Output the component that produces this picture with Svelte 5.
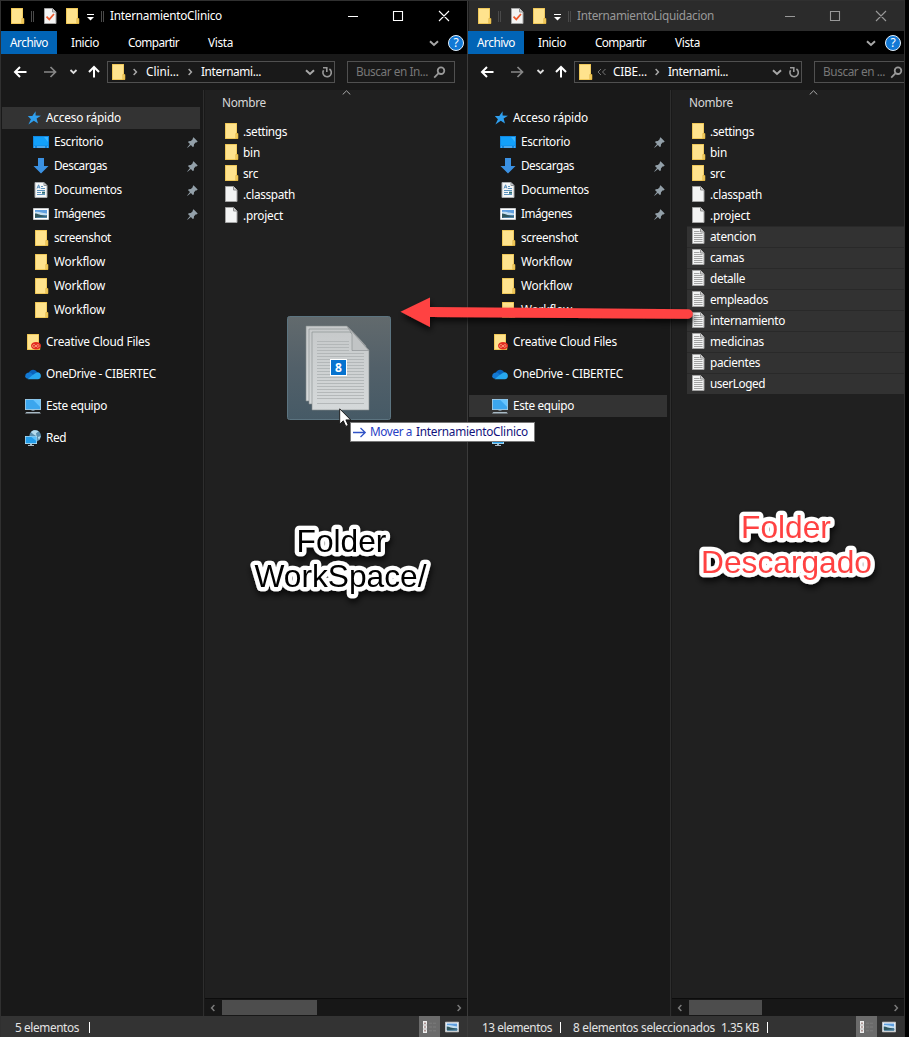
<script>
  const quick = [
    { icon: 'star', text: 'Acceso rápido', w: 75, root: true },
    { icon: 'desktop', text: 'Escritorio', w: 49, pin: true },
    { icon: 'download', text: 'Descargas', w: 53, pin: true },
    { icon: 'docs', text: 'Documentos', w: 68, pin: true },
    { icon: 'image', text: 'Imágenes', w: 51, pin: true },
    { icon: 'folder', text: 'screenshot', w: 57 },
    { icon: 'folder', text: 'Workflow', w: 51 },
    { icon: 'folder', text: 'Workflow', w: 51 },
    { icon: 'folder', text: 'Workflow', w: 51 },
    { icon: 'creative', text: 'Creative Cloud Files', w: 104, root: true, gap: true },
    { icon: 'onedrive', text: 'OneDrive - CIBERTEC', w: 110, root: true, gap: true },
    { icon: 'pc', text: 'Este equipo', w: 61, root: true, gap: true },
    { icon: 'network', text: 'Red', w: 20, root: true, gap: true },
  ];
  const tabs = [
    { text: 'Archivo', w: 38 },
    { text: 'Inicio', w: 28 },
    { text: 'Compartir', w: 51 },
    { text: 'Vista', w: 25 },
  ];
  const common = [
    { icon: 'folder', text: '.settings', w: 44 },
    { icon: 'folder', text: 'bin', w: 17 },
    { icon: 'folder', text: 'src', w: 15 },
    { icon: 'file', text: '.classpath', w: 52 },
    { icon: 'file', text: '.project', w: 40 },
  ];
  const selected = [
    ['atencion', 46], ['camas', 34], ['detalle', 35], ['empleados', 58],
    ['internamiento', 75], ['medicinas', 54], ['pacientes', 50], ['userLoged', 55],
  ].map(([text, w]) => ({ icon: 'text', text, w, selected: true }));

  const windows = [
    {
      id: 'left', title: 'InternamientoClinico', titleW: 112, current: 'Acceso rápido',
      crumb: 'Clini...', crumbW: 33, search: 'Buscar en In...', searchW: 72,
      files: common, status: [{ text: '5 elementos', w: 64 }],
    },
    {
      id: 'right', title: 'InternamientoLiquidacion', titleW: 137, current: 'Este equipo',
      crumb: 'CIBE...', crumbW: 34, search: 'Buscar en ...', searchW: 62,
      files: [...common, ...selected],
      status: [{ text: '13 elementos', w: 70 }, { text: '8 elementos seleccionados', w: 142, extra: '1.35 KB' }],
    },
  ];

  // Spreads letter spacing so a label takes its column width.
  function fit(node, width) {
    node.style.letterSpacing = '0px';
    const natural = node.getBoundingClientRect().width;
    node.style.letterSpacing = (width - natural) / node.textContent.length + 'px';
  }
</script>

{#snippet label(text, w)}<span class="label" use:fit={w}>{text}</span>{/snippet}

{#snippet icon(name)}
  <svg class="icon" width="16" height="16" viewBox="0 0 16 16">
    {#if name === 'folder' || name === 'creative'}
      <path d="M2 0H14V10.5H15V16H2Z" fill="#e9bd45" />
      <path d="M2.7 .7H13.4V15.3H2.7Z" fill="#ffe38d" />
      <path d="M12.8 10.5H15V15.5H12.8Z" fill="#f5cf5f" stroke="#d9a93a" stroke-width=".6" />
      {#if name === 'creative'}
        <ellipse cx="11" cy="11.7" rx="5" ry="3.8" fill="#e22b20" />
        <path d="M12.5 13.4 9.6 10.7C7.5 9.8 6.6 12.8 8.8 13.3 10.7 13.6 11.4 10.1 13.3 10.7 15 11.4 14 13.5 12.5 13.2" fill="none" stroke="#ffb08c" stroke-width=".8" />
      {/if}
    {:else if name === 'star'}
      <path d="M10.6 1.2 10.6 5.6 16 5.8 11.6 8.5 13 13.6 8.8 10.8 3.4 14.4 5.9 9.3 2.8 6 7.3 6Z" fill="#2f9fee" />
    {:else if name === 'desktop'}
      <path d="M0 2H16V14H0Z" fill="#1187e0" />
      <path d="M1 3H15V11.5H1Z" fill="#12a0fb" />
      <path d="M11 3H15V8Z" fill="#3bb6ff" />
      <path d="M1 13H2M4 13H12M14 13H15" stroke="#bce3ff" stroke-width=".7" />
    {:else if name === 'download'}
      <path d="M5 0H11V8H15.5L8 15.5.5 8H5Z" fill="#3b91e2" />
    {:else if name === 'docs'}
      <path d="M2 .5H11L14 3.5V15.5H2Z" fill="#f5f7f8" stroke="#a9adb0" />
      <path d="M11 .5V3.5H14" fill="none" stroke="#8b9094" />
      <path d="M4 6.5 5.6 2.8 7 6.5M4.6 5.2H6.6M8 4.5H10M8 6.5H12M4 8.5H12M4 10.5H8M4 12.5H12" fill="none" stroke="#4b86b5" stroke-width=".9" />
      <path d="M9 9.7H12V11.7H9Z" fill="#2b6d76" />
    {:else if name === 'image'}
      <path d="M.5 2.5H15.5V13.5H.5Z" fill="#fff" stroke="#c5c8ca" />
      <path d="M2 4H14V12H2Z" fill="#5f9fe0" />
      <path d="M2 6C5 5 8 6.5 14 7.5V9H2Z" fill="#c4def0" />
      <path d="M2 7.5C5 7.5 8 10 14 9.6V12H2Z" fill="#30565d" />
      <path d="M4 11.3 14 10.6V12H2Z" fill="#5185a9" />
    {:else if name === 'onedrive'}
      <path d="M3.7 7.3C4.6 3.7 9.4 2.1 12 6L8 11 2 10Z" fill="#0963bb" />
      <path d="M.2 10.2C.2 7.3 3.3 5.8 6 7L13 12.7H3C1.4 12.7.2 11.6.2 10.2Z" fill="#1379d3" />
      <path d="M7 9.4 11.4 6.4C14 5.8 16 7.7 15.9 10 15.9 11.8 14.7 13.2 12.8 13.2H2.6Z" fill="#27a7ef" />
    {:else if name === 'pc'}
      <path d="M0 1H16V12H0Z" fill="#a9cde3" />
      <path d="M.8 1.8H15.2V11.2H.8Z" fill="#3ba6ee" />
      <path d="M8 1.8H15.2V9Z" fill="#66c4fd" />
      <path d="M6.5 12H9.5V13H6.5Z" fill="#71828e" />
      <path d="M1.4 14H14.6L16 15.5H0Z" fill="#a9bac5" />
    {:else if name === 'network'}
      <circle cx="10.2" cy="5.8" r="5.8" fill="#5b8fae" />
      <path d="M6 2.2C8-.6 11-.2 13.7 1.3L11 3.3 11.6 6.2 8.7 4.6ZM12.8 7 15.8 6 14 10.2Z" fill="#b5dbed" />
      <path d="M0 6H12V14H0Z" fill="#b7dced" />
      <path d="M.7 6.7H11.3V13.2H.7Z" fill="#239ce9" />
      <path d="M6 6.7H11.3V11Z" fill="#5bc0fb" />
      <path d="M5 14H7V15H9V16H3V15H5Z" fill="#a9bac5" />
    {:else}
      <path d="M2.5 .5H10.5L14 4V15.5H2.5Z" fill="#f3f4f4" stroke="#a4a4a4" />
      <path d="M10.5 .5V4H14" fill="#d0d0d0" stroke="#929292" />
      {#if name === 'text'}
        <path d="M4 3.5H9.5M4 5.5H12.5M4 7.5H12.5M4 9.5H12.5M4 11.5H12.5M4 13.5H12.5" stroke="#989898" stroke-width=".9" />
      {:else if name === 'check'}
        <path d="M4.5 8.6 7.3 11.4 12 6" fill="none" stroke="#ed5b2e" stroke-width="1.7" />
      {/if}
    {/if}
  </svg>
{/snippet}

{#snippet chevron(dir)}
  <svg class="chevron {dir}" width="10" height="10" viewBox="0 0 10 10"><path d="M1 3.2 5 6.9 9 3.2" /></svg>
{/snippet}

<main>
  {#each windows as win (win.id)}
    <section class="window {win.id}">
      <header class="titlebar">
        <div class="quickbar">
          {@render icon('folder')}<i class="bar"></i>
          {@render icon('check')}
          {@render icon('folder')}
          <svg class="menu" width="9" height="8" viewBox="0 0 9 8"><path d="M1 1.5H8" stroke="#fff" /><path d="M1 4H8L4.5 7.5Z" fill="#fff" /></svg>
          <i class="bar second"></i>
          {@render label(win.title, win.titleW)}
        </div>
        <svg class="controls" width="104" height="12" viewBox="0 0 104 12">
          <path d="M0 6.5H10M45.5 1.5H54.5V10.5H45.5ZM91 1 101 11M101 1 91 11" />
        </svg>
      </header>

      <nav class="tabs">
        {#each tabs as tab, i}
          <div class="tab" class:primary={i === 0}>{@render label(tab.text, tab.w)}</div>
        {/each}
        <div class="help">
          {@render chevron('down')}
          <span class="question">?</span>
        </div>
      </nav>

      <div class="address">
        <svg class="arrows" width="92" height="16" viewBox="0 0 92 16">
          <path d="M6 8H17.5M11 3 6 8 11 13" stroke="#fff" stroke-width="2" />
          <path d="M35 8H46.5M41.5 3 46.5 8 41.5 13" stroke="#888" stroke-width="1.7" />
          <path d="M61.5 6 64.5 9 67.5 6" stroke="#ddd" stroke-width="1.8" />
          <path d="M85 13.5V3M80 8 85 3 90 8" stroke="#fff" stroke-width="2" />
        </svg>
        <div class="path">
          {@render icon('folder')}
          {#if win.id === 'right'}
            <svg class="double" width="10" height="8" viewBox="0 0 10 8"><path d="M4 1 1 4 4 7M8.5 1 5.5 4 8.5 7" /></svg>
          {:else}
            {@render chevron('rt')}
          {/if}
          <div class="crumb">{@render label(win.crumb, win.crumbW)}</div>
          {@render chevron('rt')}
          <div class="crumb last">{@render label('Internami...', 60)}</div>
          {@render chevron('down')}
          <svg class="refresh" width="12" height="12" viewBox="0 0 12 12"><path d="M8.4 3A4.2 4.2 0 1 1 2.6 4.2M2 1.8H5.8V6" /></svg>
        </div>
        <div class="search">
          {@render label(win.search, win.searchW)}
          <svg width="13" height="13" viewBox="0 0 13 13"><circle cx="8" cy="4.7" r="3.3" /><path d="M5.6 7.2 1.2 11.6" /></svg>
        </div>
      </div>

      <div class="body">
        <aside>
          {#each quick as item}
            <div class="item" class:root={item.root} class:gap={item.gap} class:current={item.text === win.current}>
              {@render icon(item.icon)}
              {@render label(item.text, item.w)}
              {#if item.pin}
                <svg class="pin" width="11" height="11" viewBox="0 0 11 11"><path d="M6.5.3 10.7 4.5 9.6 5.4 8.9 5.2 7 7.2 6.8 9.4 5.8 9.9 3.9 8 .6 10.8.2 10.4 3 7.1 1.1 5.2 1.6 4.2 3.9 4 5.9 2 5.7 1.2Z" fill="#93a0a9" /></svg>
              {/if}
            </div>
          {/each}
        </aside>
        <div class="list">
          <div class="colhead">
            <svg class="sort" width="9" height="5" viewBox="0 0 9 5"><path d="M.7 4.5 4.5.8 8.3 4.5" /></svg>
            {@render label('Nombre', 44)}
          </div>
          <div class="files">
            {#each win.files as file}
              <div class="file" class:selected={file.selected}>{@render icon(file.icon)}{@render label(file.text, file.w)}</div>
            {/each}
          </div>
          <div class="scroll">
            {@render chevron('lt')}
            <div class="track"><div class="thumb"></div></div>
            {@render chevron('rt')}
          </div>
        </div>
      </div>

      <footer>
        {#each win.status as part}
          <div class="part">
            {@render label(part.text, part.w)}
            {#if part.extra}{@render label(part.extra, 38)}{/if}
          </div>
        {/each}
        <div class="views">
          <div class="details">
            <svg width="19" height="14" viewBox="0 0 19 14"><path d="M3 1H7V13H3Z" fill="#eee" /><path d="M4.5 2.5H5.5V4H4.5ZM4.5 6.3H5.5V7.8H4.5ZM4.5 10.1H5.5V11.6H4.5Z" fill="#6b3b36" /><path d="M3 5H7M3 9H7" stroke="#999" stroke-width=".6" /><path d="M9 3.2H17M9 7H17M9 10.8H17" stroke="#7c7c7c" stroke-dasharray="3 1" /></svg>
          </div>
          {@render icon('image')}
        </div>
      </footer>
    </section>
  {/each}

  <svg class="overlay" width="909" height="1037" viewBox="0 0 909 1037">
    <defs>
      <filter id="shade" x="-20%" y="-40%" width="140%" height="200%"><feDropShadow dx="1" dy="4" stdDeviation="3" flood-color="#000" flood-opacity=".75" /></filter>
      <linearGradient id="glass" x1="0" y1="0" x2="0" y2="1"><stop offset="0" stop-color="#626a6d" /><stop offset=".5" stop-color="#526069" /><stop offset="1" stop-color="#465a66" /></linearGradient>
      <linearGradient id="sheet" x1="0" y1="0" x2="0" y2="1"><stop offset="0" stop-color="#c7cacb" /><stop offset="1" stop-color="#d5d9da" /></linearGradient>
    </defs>
    <path d="M400.5 311.8 430 297.5V307L688 309.2A4.7 4.7 0 0 1 688 318.7L430 317V327Z" fill="#ff4343" filter="url(#shade)" />

    <rect x="287.5" y="316.5" width="103" height="103" rx="2" fill="url(#glass)" stroke="#5c7480" />
    <g fill="url(#sheet)" stroke="#85898b" stroke-width=".6">
      <path d="M306 326H347L363 343V401H306Z" />
      <path d="M309 329H350L366 346V404H309Z" />
      <path d="M312 332H350L369 350V410H312Z" />
      <path d="M347 326 368.8 350.5H352V334Z" fill="#c1c4c5" />
    </g>
    <path d="M317 341.5H349M317 344.5H349M317 347.5H349M317 350.5H349M317 353.5H364M317 356.5H364M317 359.5H364M317 362.5H364M317 365.5H364M317 368.5H364M317 371.5H364M317 374.5H364M317 377.5H364M317 380.5H364M317 383.5H364M317 386.5H364M317 389.5H364M317 392.5H364M317 395.5H364M317 398.5H364M317 403.5H364" stroke="#b0b4b6" stroke-width=".9" />
    <rect x="330.5" y="359.5" width="16" height="16" fill="#0673cf" stroke="#fff" />
    <text x="338.5" y="372" text-anchor="middle" class="count">8</text>

    <g class="caption" filter="url(#shade)">
      <text x="341.5" y="551.5" text-anchor="middle">Folder</text>
      <text x="340.5" y="587" text-anchor="middle">WorkSpace/</text>
    </g>
    <g class="caption red" filter="url(#shade)">
      <text x="786" y="537.5" text-anchor="middle">Folder</text>
      <text x="786.5" y="573" text-anchor="middle">Descargado</text>
    </g>
  </svg>

  <div class="tooltip">
    <svg width="14" height="11" viewBox="0 0 14 11"><path d="M0 5.5H12M7.5 1 12.2 5.5 7.5 10" /></svg>
    <span class="move">{@render label('Mover a', 42)}</span>
    {@render label('InternamientoClinico', 112)}
  </div>
  <svg class="cursor" width="13" height="20" viewBox="0 0 13 20"><path d="M.7.8V16.2L4.3 12.8 6.8 18.4 9.3 17.3 6.9 11.9H11.7Z" fill="#fff" stroke="#111" stroke-width=".9" /></svg>
</main>

<style>
  :global(body) { background: #000; }
  main {
    position: relative; display: flex; width: 909px; height: 1037px; overflow: hidden;
    background: #000; color: #fff; font: 11.8px/16px "Noto Sans", "Open Sans", sans-serif;
  }
  .label { white-space: pre; flex: none; padding-bottom: 2px; }
  .icon { flex: none; display: block; }
  .window {
    box-sizing: border-box; flex: none; display: flex; flex-direction: column; height: 1037px;
    overflow: hidden; background: #191919; border-top: 1px solid #303030;
  }
  .left { width: 467px; box-shadow: inset 1px 0 #303030; }
  .right { width: 438px; border-right: 1px solid #303030; box-shadow: inset 1px 0 #3b3b3b; }
  .titlebar { flex: none; display: flex; height: 30px; align-items: center; justify-content: space-between; background: #000; margin-left: 1px; }
  .right .titlebar { background: #2b2b2b; color: #999; margin-left: 2px; }
  .quickbar { display: flex; align-items: center; padding-left: 8px; }
  .right .quickbar { padding-left: 7px; }
  .bar { box-sizing: content-box; width: 1px; height: 11px; border: 1px solid #4a4a4a; border-width: 0 1px; margin: 0 8px 0 6px; }
  .quickbar .icon + .icon { margin-left: 6px; }
  .menu { margin: 2px 6px 0 6px; }
  .bar.second { margin: 0 6px 0 0; }
  .controls { margin-right: 15px; fill: none; stroke: #fff; stroke-width: 1.1; }
  .right .controls { stroke: #999; }
  .tabs { flex: none; height: 23px; display: flex; align-items: center; background: #000; margin-left: 1px; }
  .tab { width: 56px; height: 23px; line-height: 22px; box-sizing: border-box; padding-left: 9px; }
  .tab:nth-child(2) { padding-left: 14px; }
  .tab:nth-child(3) { padding-left: 15px; width: 86px; }
  .primary { background: #0164b6; }
  .help { margin-left: auto; display: flex; align-items: center; gap: 9px; padding-right: 3px; }
  .question { width: 14px; height: 14px; border: 1px solid #e3effa; border-radius: 50%; background: #1279d6; text-align: center; line-height: 14px; font-size: 12px; }
  .chevron { flex: none; fill: none; stroke: #a8a8a8; stroke-width: 2; }
  .chevron.rt { transform: rotate(-90deg) scale(.75); }
  .chevron.lt { transform: rotate(90deg) scale(.75); }
  .address { flex: none; height: 36px; display: flex; align-items: center; padding-left: 9px; }
  .arrows { flex: none; margin-right: 6px; fill: none; }
  .path { flex: none; box-sizing: border-box; width: 228px; height: 22px; border: 1px solid #505050; display: flex; align-items: center; padding-left: 2px; }
  .path > :global(.icon + svg) { margin-left: 4px; }
  .double { fill: none; stroke: #777; }
  .crumb { width: 39px; margin-left: 6px; display: flex; }
  .crumb.last { width: 104px; }
  .refresh { margin-left: 6px; fill: none; stroke: #999; stroke-width: 1.6; }
  .search { flex: none; box-sizing: border-box; width: 108px; height: 22px; margin-left: 12px; padding: 0 8px; border: 1px solid #505050; color: #777; display: flex; align-items: center; justify-content: space-between; }
  .right .search { width: 98px; }
  .search svg { flex: none; fill: none; stroke: #999; stroke-width: 1.8; }
  .body { flex: 1; min-height: 0; display: flex; }
  aside { flex: none; width: 203px; padding-top: 16px; border-right: 1px solid #2e2e2e; }
  .item { height: 24px; margin: 0 3px 0 2px; padding: 0 2px 0 31px; box-sizing: border-box; display: flex; align-items: center; gap: 5px; }
  .item.root { padding-left: 23px; }
  .item.gap { margin-top: 8px; }
  .item.current { background: linear-gradient(#333, #333) 0 1px / 100% 22px no-repeat; }
  .item .label { margin-top: -1px; }
  .file .label { margin-top: 1px; }
  .pin { margin-left: auto; }
  .list { flex: 1; min-width: 0; display: flex; flex-direction: column; background: #202020; margin-left: 1px; }
  .colhead { position: relative; flex: none; height: 26px; box-sizing: border-box; padding: 4px 0 0 17px; color: #d8d8d8; }
  .sort { position: absolute; left: 137px; top: 0; fill: none; stroke: #aaa; }
  .files { flex: 1; padding-top: 5px; }
  .file { height: 21px; margin-left: 15px; padding-left: 3px; display: flex; align-items: center; gap: 4px; box-sizing: border-box; }
  .file .icon { margin-top: -2px; }
  .file.selected { background: #323232; box-shadow: inset 0 1px #292929; }
  .scroll { flex: none; height: 17px; display: flex; align-items: center; background: #171717; border-top: 1px solid #0c0c0c; padding: 0 3px; }
  .scroll .chevron { stroke: #7a7a7a; }
  .track { flex: 1; height: 15px; margin-left: 4px; }
  .thumb { width: 95px; height: 15px; background: #4d4d4d; }
  .right .thumb { width: 73px; }
  footer { flex: none; height: 21px; display: flex; align-items: center; background: #333; padding-left: 14px; margin-left: 1px; color: #e4e4e4; }
  .part { display: flex; align-items: center; gap: 6px; padding-right: 8px; margin-right: 12px; border-right: 1px solid #fff; height: 11px; margin-top: 1px; }
  .left .part { padding-right: 10px; }
  .part .label { margin-top: 1px; }
  .views { margin-left: auto; display: flex; align-items: center; height: 100%; padding-right: 8px; gap: 5px; }
  .details { width: 21px; height: 21px; background: #6b6b6b; display: flex; align-items: center; justify-content: center; }
  .views > :global(.icon) { width: 14px; height: 14px; }
  .overlay { position: absolute; left: 0; top: 0; pointer-events: none; }
  .count { fill: #fff; font: bold 12px "Noto Sans", sans-serif; }
  .caption { font: 31.7px "Liberation Sans", Arial, sans-serif; fill: #000; stroke: #fff; stroke-width: 8.5px; stroke-linejoin: round; paint-order: stroke; }
  .caption.red { fill: #ff4343; }
  .tooltip { position: absolute; left: 350px; top: 422px; width: 185px; height: 20px; box-sizing: border-box; border: 1px solid #777; background: #fff; color: #12127c; display: flex; align-items: center; padding-left: 2px; }
  .tooltip svg { fill: none; stroke: #3153c6; stroke-width: 1.3; margin-right: 3px; }
  .move { display: flex; width: 46px; color: #2740c4; }
  .cursor { position: absolute; left: 339px; top: 408px; }
</style>
